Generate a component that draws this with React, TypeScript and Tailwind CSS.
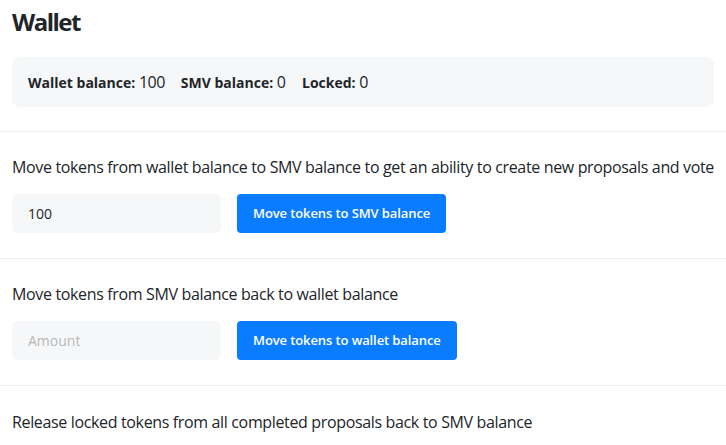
export default function App() {
  const sections = [
    {
      text: 'Move tokens from wallet balance to SMV balance to get an ability to create new proposals and vote',
      value: '100',
      button: 'Move tokens to SMV balance',
    },
    {
      text: 'Move tokens from SMV balance back to wallet balance',
      value: '',
      button: 'Move tokens to wallet balance',
    },
  ];

  return (
    <div className="min-h-screen bg-white text-[#212529]" style={{ fontFamily: '"Open Sans", "Noto Sans", sans-serif' }}>
      {/* Header + balances */}
      <div className="px-3 pt-[6px] pb-6">
        <h1 className="text-[24px] font-bold leading-8 tracking-[-1.5px] mb-[19px]">Wallet</h1>
        <div className="bg-[#f6f7f9] rounded-lg h-[50px] px-4 flex items-center gap-[16px] text-[14px]">
          <span><b className="font-bold">Wallet balance:</b> <span className="text-[16px] tracking-[-0.5px]">100</span></span>
          <span><b className="font-bold">SMV balance:</b> <span className="text-[16px]">0</span></span>
          <span><b className="font-bold">Locked:</b> <span className="text-[16px]">0</span></span>
        </div>
      </div>

      {sections.map((s) => (
        <div key={s.button} className="border-t border-[#ececec] px-3 pt-[23px] pb-[25px]">
          <p className="text-[16px] leading-6 tracking-[-0.35px] mb-[15px] whitespace-nowrap">{s.text}</p>
          <div className="flex items-center gap-4">
            <input
              defaultValue={s.value}
              placeholder="Amount"
              className="w-[209px] h-[39px] rounded-md bg-[#f6f7f9] px-4 text-[14px] outline-none placeholder:text-[#b8b8b8]"
            />
            <button className="h-[39px] px-[16px] rounded bg-[#0a7cff] text-white text-[13px] tracking-[-0.1px] font-semibold">
              {s.button}
            </button>
          </div>
        </div>
      ))}

      <div className="border-t border-[#ececec] px-3 pt-6">
        <p className="text-[16px] leading-6 tracking-[-0.35px]">Release locked tokens from all completed proposals back to SMV balance</p>
      </div>
    </div>
  );
}
